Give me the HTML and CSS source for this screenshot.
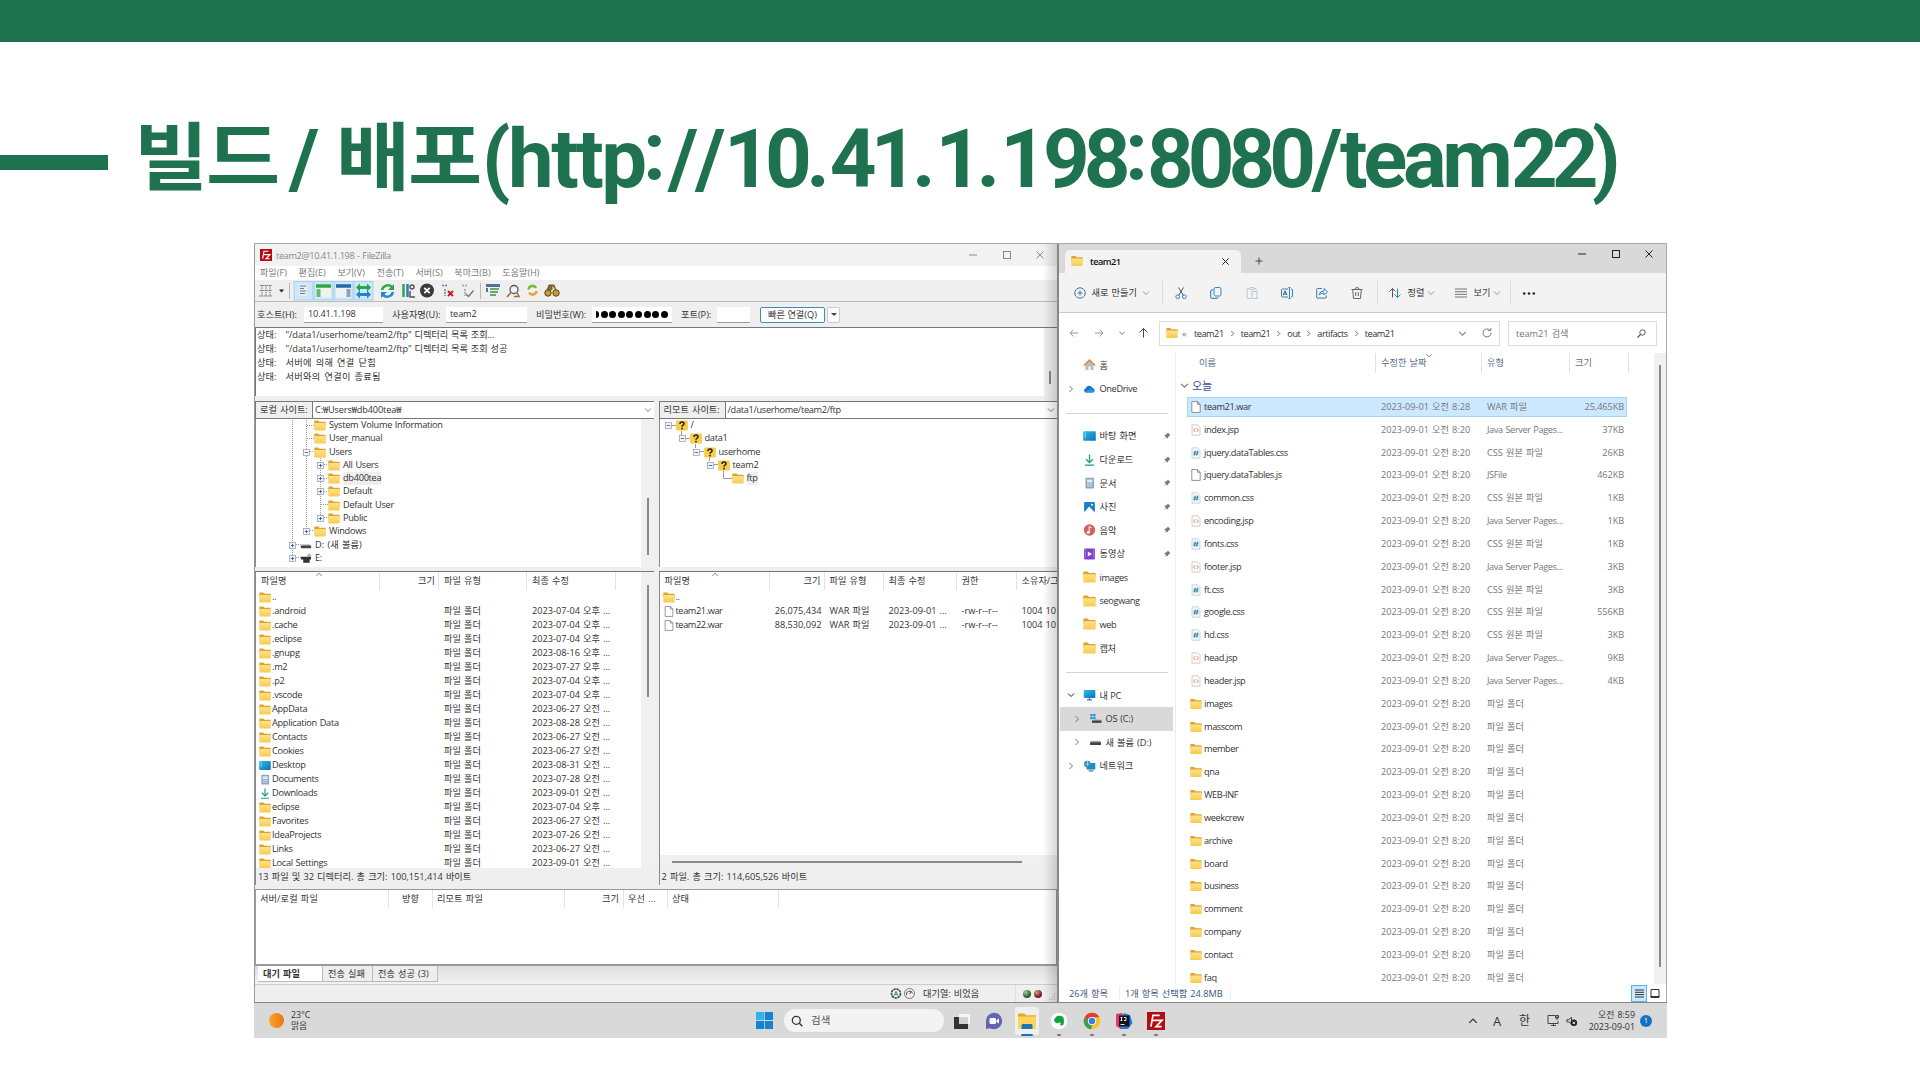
FILE: index.html
```html
<!DOCTYPE html>
<html lang="ko">
<head>
<meta charset="utf-8">
<title>빌드 / 배포</title>
<link rel="stylesheet" href="styles.css">
</head>
<body>
<svg class="defs" aria-hidden="true">
  <defs>
    <linearGradient id="gold" x1="0" y1="0" x2="0" y2="1"><stop offset="0" stop-color="#ffe28a"/><stop offset="1" stop-color="#f8cb4c"/></linearGradient>
    <linearGradient id="blue" x1="0" y1="0" x2="1" y2="1"><stop offset="0" stop-color="#2fc0ea"/><stop offset="1" stop-color="#0b6fb8"/></linearGradient>
    <symbol id="folder" viewBox="0 0 12 11"><path d="M.3 1.2Q.3.5 1 .5h3.300l1.200 1.300h5.500q.7 0 .7.7v3H.3z" fill="#dfa32c"/><rect x=".3" y="2.900" width="11.400" height="7.600" rx=".7" fill="url(#gold)"/></symbol>
    <symbol id="qfolder" viewBox="0 0 12 11"><rect x=".2" y=".6" width="11.600" height="10" rx=".7" fill="#f9cc45"/><path d="M4 4q0-2 2-2t2 1.700q0 1-1 1.500T6 6.700" fill="none" stroke="#222" stroke-width="1.500"/><rect x="5.200" y="7.800" width="1.600" height="1.600" fill="#222"/></symbol>
    <symbol id="file" viewBox="0 0 10 12"><path d="M.8.6h5.700L9.200 3.300v8.100H.8zM6.500.6v2.700h2.700" fill="#fff" stroke="#858585" stroke-width=".9"/></symbol>
    <symbol id="css" viewBox="0 0 10 12"><path d="M1 .8h5.700L9 3.200v8H1z" fill="#f2f8fb" stroke="#b7c9d3" stroke-width=".7"/><path d="M4.300 3.600 3.300 8.600M6.700 3.600 5.700 8.600M2.600 5.200h5M2.300 7.100h5" stroke="#2b7e9c" stroke-width=".9"/></symbol>
    <symbol id="jsp" viewBox="0 0 10 12"><path d="M1 .8h5.700L9 3.200v8H1z" fill="#fffdfb" stroke="#bbb" stroke-width=".7"/><path d="M4.200 4.200 2.600 6.100 4.200 8M5.800 4.200l1.600 1.900L5.800 8" fill="none" stroke="#d4825c" stroke-width=".9"/></symbol>
    <symbol id="desk" viewBox="0 0 12 10"><rect x=".2" y=".6" width="11.600" height="8.800" rx=".8" fill="url(#blue)"/><path d="M1.700 2.500h1M1.700 4.300h1M1.700 6.100h1" stroke="#d6f5ff" stroke-width=".8"/></symbol>
    <symbol id="doc" viewBox="0 0 12 12"><rect x="2" y=".7" width="8.500" height="10.800" rx=".8" fill="#8ba6c1"/><rect x="3.500" y="2.500" width="5.500" height="3" fill="#dfe9f3"/><path d="M3.500 7h5.500M3.500 9h5.500" stroke="#e8eff6" stroke-width=".8"/></symbol>
    <symbol id="down" viewBox="0 0 12 12"><path d="M6 .5v8M2.500 5.200 6 8.700l3.500-3.500M1.500 11.200h9" fill="none" stroke="#1e9e80" stroke-width="1.300"/></symbol>
    <symbol id="pic" viewBox="0 0 12 12"><rect x=".6" y="1" width="10.800" height="10" rx="1" fill="#1780c8"/><path d="M1 11l4.600-5.500L10.800 11z" fill="#fff"/><circle cx="8.500" cy="3.700" r="1" fill="#fff"/></symbol>
    <symbol id="music" viewBox="0 0 12 12"><circle cx="6" cy="6" r="5.700" fill="#d1625c"/><path d="M5.700 8.500V2.600l2.300 1" fill="none" stroke="#fff" stroke-width="1"/><circle cx="4.700" cy="8.500" r="1.400" fill="#fff"/></symbol>
    <symbol id="video" viewBox="0 0 12 12"><rect x=".6" y=".6" width="10.800" height="10.800" rx=".8" fill="#7c3fce"/><path d="M4.300 3.500 8.500 6l-4.200 2.500z" fill="#fff"/><path d="M2 1.500v9M10 1.500v9" stroke="#d9c1f5" stroke-width=".8" stroke-dasharray="1 1.200"/></symbol>
    <symbol id="pc" viewBox="0 0 12 12"><rect x=".2" y="1" width="11.600" height="8" rx=".7" fill="url(#blue)"/><path d="M3.500 10.800h5M6 9v1.800" stroke="#47769a" stroke-width="1.200"/></symbol>
    <symbol id="net" viewBox="0 0 12 12"><rect x="3" y="3" width="8.800" height="6.500" rx=".6" fill="#1b8ccb"/><circle cx="3.800" cy="4" r="3.200" fill="#3d88b5"/><path d="M2 4h4M4 1v5" stroke="#bfe2f5" stroke-width=".7"/><path d="M5 11h5M7.400 9.500V11" stroke="#47769a" stroke-width="1.100"/></symbol>
    <symbol id="drive" viewBox="0 0 12 12"><path d="M1.500 5h9l1 1.500H.5z" fill="#999"/><rect x=".5" y="6.200" width="11" height="2.700" rx=".5" fill="#444"/></symbol>
    <symbol id="osdrive" viewBox="0 0 12 12"><path d="M.8 1h2.300v2.300H.8zM3.700 1H6v2.300H3.700zM.8 3.900h2.300v2.300H.8zM3.700 3.900H6v2.300H3.700z" fill="#1d91d8"/><path d="M5 6.500h6l.8 1.200H4.500z" fill="#aaa"/><rect x="2.500" y="7.500" width="9.500" height="2.400" fill="#444"/></symbol>
    <symbol id="reader" viewBox="0 0 12 12"><circle cx="9.500" cy="2.500" r="2" fill="#bbb"/><path d="M.5 4h11v3H.5zM3 7h7v3.500H3z" fill="#333"/></symbol>
    <symbol id="home" viewBox="0 0 12 12"><path d="M2 5.500V11h3V7.500h2V11h3V5.500L6 2z" fill="#b9bec4"/><path d="M.5 6.500 6 1.200l5.500 5.300" fill="none" stroke="#d98546" stroke-width="1.700"/></symbol>
    <symbol id="cloud" viewBox="0 0 12 12"><path d="M2.500 9.500A2.200 2.200 0 0 1 2.300 5.200 3.500 3.500 0 0 1 8.800 4.700 2.500 2.500 0 0 1 9.500 9.500z" fill="#1276d0"/><path d="M1.500 9 7 5.600l4.200 3q-.6.900-1.700.9h-7z" fill="#2597e6"/></symbol>
    <symbol id="pin" viewBox="0 0 8 8"><path d="M4.800.5 7.500 3.200 5.900 4 4.600 6.600 3.100 5.200.7 7.400l2.100-2.700-1.500-1.400L4 2.100z" fill="#777"/></symbol>
    <symbol id="plus" viewBox="0 0 7 7"><rect x=".5" y=".5" width="6" height="6" fill="#f4f6fa" stroke="#8c98a8" stroke-width=".7"/><path d="M1.800 3.500h3.400M3.500 1.800v3.400" stroke="#2f4f88" stroke-width=".8"/></symbol>
    <symbol id="minus" viewBox="0 0 7 7"><rect x=".5" y=".5" width="6" height="6" fill="#f4f6fa" stroke="#8c98a8" stroke-width=".7"/><path d="M1.800 3.500h3.400" stroke="#2f4f88" stroke-width=".8"/></symbol>
    <symbol id="cv" viewBox="0 0 8 8"><path d="M1 2.500 4 5.500l3-3" fill="none" stroke="currentColor" stroke-width="1"/></symbol>
    <symbol id="cr" viewBox="0 0 8 8"><path d="M2.500 1 5.500 4l-3 3" fill="none" stroke="currentColor" stroke-width="1"/></symbol>
    <symbol id="cu" viewBox="0 0 8 8"><path d="M1 5.500 4 2.500l3 3" fill="none" stroke="currentColor" stroke-width="1"/></symbol>
    <symbol id="wmin" viewBox="0 0 10 10"><path d="M1 5h8" stroke="currentColor"/></symbol>
    <symbol id="wmax" viewBox="0 0 10 10"><rect x="1.500" y="1.500" width="7" height="7" fill="none" stroke="currentColor"/></symbol>
    <symbol id="wx" viewBox="0 0 10 10"><path d="M1.500 1.500l7 7M8.500 1.500l-7 7" stroke="currentColor"/></symbol>
    <symbol id="fz" viewBox="0 0 16 16"><rect width="16" height="16" fill="#b30d12"/><path d="M3.500 13 5.300 3h6M4.400 7.500h4M8.300 7.500h5L8 13h5" fill="none" stroke="#fff" stroke-width="1.500"/></symbol>
  </defs>
</svg>

<div class="topbar"></div>
<header class="title"><span class="dash"></span><h1><span class="t1">빌드</span><span class="t2">/</span><span class="t3">배포</span><span class="u1">(http</span><span class="u2 colon">:</span><span class="u3">//</span><span class="u4">10<i>.</i>41<i>.</i>1<i>.</i>1</span><span class="u5">98</span><span class="u6 colon">:</span><span class="u7">8080</span><span class="u8">/</span><span class="u9">team</span><span class="u10">22</span><span>)</span></h1></header>

<main class="screen">
<div class="windows">
<section class="fzwin">
  <div class="fz-title"><svg class="i12"><use href="#fz"/></svg><span>team2@10.41.1.198 - FileZilla</span><div class="winbtns"><svg><use href="#wmin"/></svg><svg><use href="#wmax"/></svg><svg><use href="#wx"/></svg></div></div>
  <nav class="fz-menu"><span>파일(F)</span><span>편집(E)</span><span>보기(V)</span><span>전송(T)</span><span>서버(S)</span><span>북마크(B)</span><span>도움말(H)</span></nav>
  <div class="fz-tools">
    <svg class="strip" width="310" height="22" viewBox="0 0 310 22">
      <g stroke="#666" stroke-width=".9" stroke-dasharray="1.500 .8" fill="none"><path d="M5 5.500h12M5 10.500h12M4 16h14M7 5v11M11 5v11M15 5v11"/></g>
      <path d="M24 9.500h5l-2.500 3z" fill="#222"/>
      <path d="M34.500 3v16M225.500 3v16" stroke="#b9b9b9"/>
      <g fill="#cde6f8" stroke="#9bccee" stroke-width=".8"><rect x="39" y="1.500" width="19" height="18.500"/><rect x="59" y="1.500" width="19" height="18.500"/><rect x="79" y="1.500" width="19" height="18.500"/><rect x="99" y="1.500" width="19" height="18.500"/></g>
      <rect x="44" y="4" width="8" height="12" fill="#e5edf2"/><path d="M45 6h6M45 8.500h4M45 11h6M45 13.500h5" stroke="#66809a"/>
      <rect x="61" y="4.500" width="15" height="13" fill="#eef4ee"/><path d="M61 6h15" stroke="#2ca745" stroke-width="3.500"/><path d="M63.500 9v8" stroke="#69b978" stroke-width="4"/>
      <rect x="81" y="4.500" width="15" height="13" fill="#edf2f7"/><path d="M81 6h15" stroke="#2667ab" stroke-width="3.500"/><path d="M93.500 9v8" stroke="#8fa4b8" stroke-width="4"/>
      <path d="M103 7.500h12" stroke="#2ba84a" stroke-width="3"/><path d="M112 3.500l4 4-4 4zM105 3.500l-4 4 4 4z" fill="#23a53f"/><path d="M103 14.500h12" stroke="#2384cc" stroke-width="3"/><path d="M112 10.500l4 4-4 4zM105 10.500l-4 4 4 4z" fill="#2384cc"/>
      <path d="M127 10a6 6 0 0 1 10-3" fill="none" stroke="#2aa84c" stroke-width="2.500"/><path d="M139 4v6h-6z" fill="#2aa84c"/><path d="M138 12a6 6 0 0 1-10 3" fill="none" stroke="#248ac9" stroke-width="2.500"/><path d="M126 18v-6h6z" fill="#248ac9"/>
      <path d="M148.500 4v13" stroke="#2aa84c" stroke-width="2.500"/><path d="M152.500 4v13" stroke="#277fc5" stroke-width="2.500"/><circle cx="157" cy="7" r="2" fill="none" stroke="#555" stroke-width="1.500"/><path d="M155 11v6h5" stroke="#555" fill="none" stroke-width="1.500"/>
      <circle cx="172" cy="10.500" r="7" fill="#3a3a3a"/><path d="M169.300 7.800l5.400 5.400M174.700 7.800l-5.400 5.400" stroke="#fff" stroke-width="1.800"/>
      <path d="M187 5.500h6M190 9v7" stroke="#5580b5" stroke-width="1.500" stroke-dasharray="2 1"/><path d="M193 11l5 5M198 11l-5 5" stroke="#c4202a" stroke-width="2"/>
      <path d="M207 5.500h6M210 9v7" stroke="#8ba2bf" stroke-width="1.500" stroke-dasharray="2 1"/><path d="M211 14l2.500 2.500 5-6" fill="none" stroke="#777" stroke-width="1.500"/>
      <path d="M231 5.500h14" stroke="#4f7395" stroke-width="3"/><path d="M235 9h9M235 12h8M235 15h6" stroke="#6aa76d" stroke-width="2"/><path d="M232 8v4" stroke="#4f7395" stroke-width="2"/>
      <circle cx="259" cy="9.500" r="4" fill="#edf3fa" stroke="#555" stroke-width="1.300"/><path d="M256 12.500l-4 4.500M262 12.500l2 4h-5" fill="none" stroke="#966f49" stroke-width="1.500"/>
      <path d="M273.500 9.500a4 4 0 0 1 7.500-1.500" fill="none" stroke="#7fb73a" stroke-width="2.500"/><path d="M281.500 11a4 4 0 0 1-7.500 1.500" fill="none" stroke="#e5a734" stroke-width="2.500"/>
      <path d="M291 13l3-8h3v5M302 13l-3-8h-2" fill="#8a6e2d" stroke="#6b5425" stroke-width="1"/><circle cx="293" cy="13" r="3.200" fill="#c99d35" stroke="#584315"/><circle cx="301" cy="13" r="3.200" fill="#c99d35" stroke="#584315"/>
    </svg>
  </div>
  <div class="quick">
    <span class="ql a">호스트(H):</span><span class="qf a">10.41.1.198</span>
    <span class="ql b">사용자명(U):</span><span class="qf b">team2</span>
    <span class="ql c">비밀번호(W):</span><span class="qf c"><i class="cut"></i><i></i><i></i><i></i><i></i><i></i><i></i><i></i><i></i></span>
    <span class="ql d">포트(P):</span><span class="qf d"></span>
    <button class="connect">빠른 연결(Q)</button><button class="more"><i></i></button>
  </div>
  <div class="log"><div class="lines">
    <p><b>상태:</b>"/data1/userhome/team2/ftp" 디렉터리 목록 조회...</p>
    <p><b>상태:</b>"/data1/userhome/team2/ftp" 디렉터리 목록 조회 성공</p>
    <p class="ko"><b>상태:</b>서버에 의해 연결 닫힘</p>
    <p class="ko"><b>상태:</b>서버와의 연결이 종료됨</p></div><div class="sb"><i class="th-log"></i></div>
  </div>
  <div class="panes">
    <div class="pane local">
      <div class="site"><label>로컬 사이트:</label><span>C:₩Users₩db400tea₩</span><svg class="i8"><use href="#cv"/></svg></div>
      <div class="tree">
        <div class="nodes">
          <svg class="guides" width="80" height="148"><path d="M37.500 0v138M51.500 0v113M65.500 38v61M52 7.500h8M52 20.500h8M55 33.500h6M69 46.500h6M69 60.500h6M69 73.500h6M66 86.500h8M69 99.500h6M55 112.500h6M41 126.500h6M41 139.500h6" stroke="#999" stroke-dasharray="1 1" fill="none"/></svg>
          <div class="n l1 leaf"><svg class="f"><use href="#folder"/></svg>System Volume Information</div>
          <div class="n l1 leaf"><svg class="f"><use href="#folder"/></svg>User_manual</div>
          <div class="n l1"><svg class="e"><use href="#minus"/></svg><svg class="f"><use href="#folder"/></svg>Users</div>
          <div class="n l2"><svg class="e"><use href="#plus"/></svg><svg class="f"><use href="#folder"/></svg>All Users</div>
          <div class="n l2"><svg class="e"><use href="#plus"/></svg><svg class="f"><use href="#folder"/></svg><span class="cur">db400tea</span></div>
          <div class="n l2"><svg class="e"><use href="#plus"/></svg><svg class="f"><use href="#folder"/></svg>Default</div>
          <div class="n l2 leaf"><svg class="f"><use href="#folder"/></svg>Default User</div>
          <div class="n l2"><svg class="e"><use href="#plus"/></svg><svg class="f"><use href="#folder"/></svg>Public</div>
          <div class="n l1"><svg class="e"><use href="#plus"/></svg><svg class="f"><use href="#folder"/></svg>Windows</div>
          <div class="n l0"><svg class="e"><use href="#plus"/></svg><svg class="f"><use href="#drive"/></svg><span class="ko">D: (새 볼륨)</span></div>
          <div class="n l0"><svg class="e"><use href="#plus"/></svg><svg class="f"><use href="#reader"/></svg>E:</div>
        </div><div class="sb"><i class="th-tree"></i></div>
      </div>
      <div class="list">
        <div class="rows">
          <div class="h r"><span>파일명</span><span class="num">크기</span><span>파일 유형</span><span>최종 수정</span><svg class="sort"><use href="#cu"/></svg></div>
          <div class="r"><span><svg><use href="#folder"/></svg>..</span></div>
          <div class="r"><span><svg><use href="#folder"/></svg>.android</span><span></span><span>파일 폴더</span><span>2023-07-04 오후 ...</span></div>
          <div class="r"><span><svg><use href="#folder"/></svg>.cache</span><span></span><span>파일 폴더</span><span>2023-07-04 오후 ...</span></div>
          <div class="r"><span><svg><use href="#folder"/></svg>.eclipse</span><span></span><span>파일 폴더</span><span>2023-07-04 오후 ...</span></div>
          <div class="r"><span><svg><use href="#folder"/></svg>.gnupg</span><span></span><span>파일 폴더</span><span>2023-08-16 오후 ...</span></div>
          <div class="r"><span><svg><use href="#folder"/></svg>.m2</span><span></span><span>파일 폴더</span><span>2023-07-27 오후 ...</span></div>
          <div class="r"><span><svg><use href="#folder"/></svg>.p2</span><span></span><span>파일 폴더</span><span>2023-07-04 오후 ...</span></div>
          <div class="r"><span><svg><use href="#folder"/></svg>.vscode</span><span></span><span>파일 폴더</span><span>2023-07-04 오후 ...</span></div>
          <div class="r"><span><svg><use href="#folder"/></svg>AppData</span><span></span><span>파일 폴더</span><span>2023-06-27 오전 ...</span></div>
          <div class="r"><span><svg><use href="#folder"/></svg>Application Data</span><span></span><span>파일 폴더</span><span>2023-08-28 오전 ...</span></div>
          <div class="r"><span><svg><use href="#folder"/></svg>Contacts</span><span></span><span>파일 폴더</span><span>2023-06-27 오전 ...</span></div>
          <div class="r"><span><svg><use href="#folder"/></svg>Cookies</span><span></span><span>파일 폴더</span><span>2023-06-27 오전 ...</span></div>
          <div class="r"><span><svg><use href="#desk"/></svg>Desktop</span><span></span><span>파일 폴더</span><span>2023-08-31 오전 ...</span></div>
          <div class="r"><span><svg><use href="#doc"/></svg>Documents</span><span></span><span>파일 폴더</span><span>2023-07-28 오전 ...</span></div>
          <div class="r"><span><svg><use href="#down"/></svg>Downloads</span><span></span><span>파일 폴더</span><span>2023-09-01 오전 ...</span></div>
          <div class="r"><span><svg><use href="#folder"/></svg>eclipse</span><span></span><span>파일 폴더</span><span>2023-07-04 오후 ...</span></div>
          <div class="r"><span><svg><use href="#folder"/></svg>Favorites</span><span></span><span>파일 폴더</span><span>2023-06-27 오전 ...</span></div>
          <div class="r"><span><svg><use href="#folder"/></svg>IdeaProjects</span><span></span><span>파일 폴더</span><span>2023-07-26 오전 ...</span></div>
          <div class="r"><span><svg><use href="#folder"/></svg>Links</span><span></span><span>파일 폴더</span><span>2023-06-27 오전 ...</span></div>
          <div class="r"><span><svg><use href="#folder"/></svg>Local Settings</span><span></span><span>파일 폴더</span><span>2023-09-01 오전 ...</span></div>
        </div><div class="sb"><i class="th-list"></i></div>
      </div>
      <div class="sum">13 파일 및 32 디렉터리. 총 크기: 100,151,414 바이트</div>
    </div>
    <div class="pane remote">
      <div class="site"><label>리모트 사이트:</label><span>/data1/userhome/team2/ftp</span><svg class="i8"><use href="#cv"/></svg></div>
      <div class="tree">
        <div class="nodes">
          <svg class="guides" width="90" height="148"><path d="M12 7.500h5M26 20.500h5M40 33.500h5M54 46.500h5M22.500 13v4M36.500 26v4M50.500 39v4M64.500 52v8.500h9" stroke="#999" fill="none"/></svg>
          <div class="n m0"><svg class="e"><use href="#minus"/></svg><svg class="f"><use href="#qfolder"/></svg>/</div>
          <div class="n m1"><svg class="e"><use href="#minus"/></svg><svg class="f"><use href="#qfolder"/></svg>data1</div>
          <div class="n m2"><svg class="e"><use href="#minus"/></svg><svg class="f"><use href="#qfolder"/></svg>userhome</div>
          <div class="n m3"><svg class="e"><use href="#minus"/></svg><svg class="f"><use href="#qfolder"/></svg>team2</div>
          <div class="n m4 leaf"><svg class="f"><use href="#folder"/></svg><span class="cur">ftp</span></div>
        </div>
      </div>
      <div class="list">
        <div class="rows">
          <div class="h r"><span>파일명</span><span class="num">크기</span><span>파일 유형</span><span>최종 수정</span><span>권한</span><span>소유자/그</span><svg class="sort"><use href="#cu"/></svg></div>
          <div class="r"><span><svg><use href="#folder"/></svg>..</span></div>
          <div class="r"><span><svg><use href="#file"/></svg>team21.war</span><span class="num">26,075,434</span><span>WAR 파일</span><span>2023-09-01 ...</span><span>-rw-r--r--</span><span>1004 10</span></div>
          <div class="r"><span><svg><use href="#file"/></svg>team22.war</span><span class="num">88,530,092</span><span>WAR 파일</span><span>2023-09-01 ...</span><span>-rw-r--r--</span><span>1004 10</span></div>
        </div>
        <div class="hsb"><i></i></div>
      </div>
      <div class="sum">2 파일. 총 크기: 114,605,526 바이트</div>
    </div>
  </div>
  <div class="queue"><div class="qh"><span>서버/로컬 파일</span><span>방향</span><span>리모트 파일</span><span class="num">크기</span><span>우선 ...</span><span>상태</span></div></div>
  <div class="tabs"><span class="on">대기 파일</span><span>전송 실패</span><span>전송 성공 (3)</span></div>
  <div class="fz-status">
    <svg width="26" height="13" viewBox="0 0 26 13"><circle cx="6" cy="6.500" r="4.500" fill="#eee" stroke="#444" stroke-width="1.600" stroke-dasharray="2.400 .6"/><path d="M4.300 8.700 6 4.300l1.700 4.400M5 7.400h2" stroke="#28a745" fill="none"/><circle cx="19.500" cy="6.500" r="5" fill="#eee" stroke="#777"/><path d="M16.500 8a3 3 0 0 1 6-1.500M19.500 7l2-2.500" stroke="#555" fill="none"/></svg>
    <span>대기열: 비었음</span><i class="vsep"></i><i class="led g"></i><i class="led r2"></i>
    <svg class="grip" width="8" height="8"><path d="M6 1h1M4 3.500h3M1 6h6" stroke="#aaa" stroke-dasharray="1.200 1.200"/></svg>
  </div>
  <div class="shade"></div>
</section>

<section class="exp">
  <div class="strip2"><div class="tab"><svg class="i12"><use href="#folder"/></svg><span>team21</span><svg class="i9"><use href="#wx"/></svg></div><svg class="add" viewBox="0 0 10 10"><path d="M1.500 5h7M5 1.500v7" stroke="#444"/></svg><div class="winbtns"><svg><use href="#wmin"/></svg><svg><use href="#wmax"/></svg><svg><use href="#wx"/></svg></div></div>
  <div class="cmds">
    <svg class="c1" width="14" height="14" viewBox="0 0 14 14"><circle cx="7" cy="7" r="5.200" fill="none" stroke="#56708a"/><path d="M4.500 7h5M7 4.500v5" stroke="#2a7ec0"/></svg>
    <span class="w1">새로 만들기</span><svg class="i8"><use href="#cv"/></svg><i class="vsep"></i>
    <svg width="14" height="14" viewBox="0 0 14 14"><path d="M4.500 1.500l5 8M9.500 1.500l-5 8" stroke="#555" fill="none"/><circle cx="3.700" cy="10.700" r="1.900" fill="none" stroke="#2b86cc"/><circle cx="10.300" cy="10.700" r="1.900" fill="none" stroke="#2b86cc"/></svg>
    <svg width="14" height="14" viewBox="0 0 14 14"><rect x="5" y="1.500" width="7" height="8.500" rx="1.500" fill="none" stroke="#2b86cc"/><path d="M4 4H2.700q-1 0-1 1v6.300q0 1 1 1H8q1 0 1-1" fill="none" stroke="#2b6ea8"/></svg>
    <svg width="14" height="14" viewBox="0 0 14 14"><path d="M5 2.500H2.200v10H6M9 2.500h2v2M5 1.500h4v2H5z" fill="none" stroke="#c6c9cc"/><rect x="7" y="5.500" width="5" height="7" fill="none" stroke="#a9cbe4"/></svg>
    <svg width="14" height="14" viewBox="0 0 14 14"><path d="M8 3H2.500q-1 0-1 1v6q0 1 1 1H8M11 3q1.500 0 1.500 1v6q0 1-1.500 1M9.500 1.500v11M8.500 1.500h2M8.500 12.500h2" fill="none" stroke="#2b86cc"/><path d="M3.200 9.200 5 4.800l1.800 4.400M4 8h2.200" stroke="#555" fill="none"/></svg>
    <svg width="14" height="14" viewBox="0 0 14 14"><path d="M7 2.500H2.500q-.8 0-.8.800v8q0 .8.800.8h8q.8 0 .8-.8V9.500" fill="none" stroke="#4d7898"/><path d="M4 9q.5-4 5-4V2.500l3.500 3.300L9 9V7Q5.500 7 4 9z" fill="none" stroke="#2b86cc"/></svg>
    <svg class="trash" width="14" height="14" viewBox="0 0 14 14"><path d="M1.500 3.500h11M5 3.500q0-2 2-2t2 2M2.700 3.500l.8 9h7l.8-9M5.700 6v4M8.300 6v4" fill="none" stroke="#666"/></svg>
    <i class="vsep v2"></i>
    <svg class="c3" width="14" height="14" viewBox="0 0 14 14"><path d="M4.500 11.500v-9M1.500 5.500l3-3 3 3" fill="none" stroke="#555"/><path d="M9.500 2.500v9M6.500 8.500l3 3 3-3" fill="none" stroke="#2b86cc"/></svg>
    <span class="w2">정렬</span><svg class="i8"><use href="#cv"/></svg>
    <svg class="c4" width="14" height="14" viewBox="0 0 14 14"><path d="M1 3h12M1 5.700h12M1 8.300h12M1 11h12" stroke="#666" stroke-width=".9"/></svg>
    <span class="w2">보기</span><svg class="i8"><use href="#cv"/></svg><i class="vsep v3"></i>
    <svg width="14" height="14" viewBox="0 0 14 14"><g fill="#222"><circle cx="2.200" cy="7.500" r="1.300"/><circle cx="7" cy="7.500" r="1.300"/><circle cx="11.800" cy="7.500" r="1.300"/></g></svg>
  </div>
  <div class="nav">
    <svg class="arrows" width="92" height="14" viewBox="0 0 92 14"><g fill="none"><path d="M12 7H4M7.500 3.500 4 7l3.500 3.500M29 7h8M33.500 3.500 37 7l-3.500 3.500" stroke="#999"/><path d="M53.500 5.500l2.500 3 2.500-3" stroke="#888"/><path d="M77.500 11.500v-9M73.500 6.500l4-4 4 4" stroke="#444"/></g></svg>
    <div class="addr"><svg class="i12"><use href="#folder"/></svg><em>«</em><span>team21</span><svg><use href="#cr"/></svg><span>team21</span><svg><use href="#cr"/></svg><span>out</span><svg><use href="#cr"/></svg><span>artifacts</span><svg><use href="#cr"/></svg><span>team21</span><svg class="drop"><use href="#cv"/></svg><svg class="ref" viewBox="0 0 12 12"><path d="M10 6a4 4 0 1 1-1.300-3M9.800 1v2.600H7.200" fill="none" stroke="#777"/></svg></div>
    <div class="find"><span>team21 검색</span><svg width="11" height="11" viewBox="0 0 11 11"><circle cx="6.500" cy="4.500" r="2.700" fill="none" stroke="#555"/><path d="M4.500 6.500 1.500 9.500" stroke="#555" stroke-width="1.300"/></svg></div>
  </div>
  <div class="body">
    <aside>
      <div class="s"><b></b><svg><use href="#home"/></svg>홈</div>
      <div class="s"><b><svg><use href="#cr"/></svg></b><svg><use href="#cloud"/></svg>OneDrive</div>
      <div class="s hr"></div>
      <div class="s ko"><b></b><svg><use href="#desk"/></svg>바탕 화면<svg class="pin"><use href="#pin"/></svg></div>
      <div class="s ko"><b></b><svg><use href="#down"/></svg>다운로드<svg class="pin"><use href="#pin"/></svg></div>
      <div class="s ko"><b></b><svg><use href="#doc"/></svg>문서<svg class="pin"><use href="#pin"/></svg></div>
      <div class="s ko"><b></b><svg><use href="#pic"/></svg>사진<svg class="pin"><use href="#pin"/></svg></div>
      <div class="s ko"><b></b><svg><use href="#music"/></svg>음악<svg class="pin"><use href="#pin"/></svg></div>
      <div class="s ko"><b></b><svg><use href="#video"/></svg>동영상<svg class="pin"><use href="#pin"/></svg></div>
      <div class="s"><b></b><svg><use href="#folder"/></svg>images</div>
      <div class="s"><b></b><svg><use href="#folder"/></svg>seogwang</div>
      <div class="s"><b></b><svg><use href="#folder"/></svg>web</div>
      <div class="s"><b></b><svg><use href="#folder"/></svg>캡처</div>
      <div class="s hr"></div>
      <div class="s"><b class="open"><svg><use href="#cv"/></svg></b><svg><use href="#pc"/></svg>내 PC</div>
      <div class="s sub sel"><b><svg><use href="#cr"/></svg></b><svg><use href="#osdrive"/></svg>OS (C:)</div>
      <div class="s sub ko"><b><svg><use href="#cr"/></svg></b><svg><use href="#drive"/></svg>새 볼륨 (D:)</div>
      <div class="s ko"><b><svg><use href="#cr"/></svg></b><svg><use href="#net"/></svg>네트워크</div>
    </aside>
    <div class="files">
      <div class="fh"><span>이름</span><span>수정한 날짜</span><span>유형</span><span>크기</span><svg class="sort"><use href="#cv"/></svg></div>
      <div class="grp"><svg class="i9"><use href="#cv"/></svg>오늘</div>
      <div class="fr on"><span><svg><use href="#file"/></svg>team21.war</span><span>2023-09-01 오전 8:28</span><span>WAR 파일</span><span>25,465KB</span></div>
      <div class="fr"><span><svg><use href="#jsp"/></svg>index.jsp</span><span>2023-09-01 오전 8:20</span><span class="en">Java Server Pages...</span><span>37KB</span></div>
      <div class="fr"><span><svg><use href="#css"/></svg>jquery.dataTables.css</span><span>2023-09-01 오전 8:20</span><span>CSS 원본 파일</span><span>26KB</span></div>
      <div class="fr"><span><svg><use href="#file"/></svg>jquery.dataTables.js</span><span>2023-09-01 오전 8:20</span><span class="en">JSFile</span><span>462KB</span></div>
      <div class="fr"><span><svg><use href="#css"/></svg>common.css</span><span>2023-09-01 오전 8:20</span><span>CSS 원본 파일</span><span>1KB</span></div>
      <div class="fr"><span><svg><use href="#jsp"/></svg>encoding.jsp</span><span>2023-09-01 오전 8:20</span><span class="en">Java Server Pages...</span><span>1KB</span></div>
      <div class="fr"><span><svg><use href="#css"/></svg>fonts.css</span><span>2023-09-01 오전 8:20</span><span>CSS 원본 파일</span><span>1KB</span></div>
      <div class="fr"><span><svg><use href="#jsp"/></svg>footer.jsp</span><span>2023-09-01 오전 8:20</span><span class="en">Java Server Pages...</span><span>3KB</span></div>
      <div class="fr"><span><svg><use href="#css"/></svg>ft.css</span><span>2023-09-01 오전 8:20</span><span>CSS 원본 파일</span><span>3KB</span></div>
      <div class="fr"><span><svg><use href="#css"/></svg>google.css</span><span>2023-09-01 오전 8:20</span><span>CSS 원본 파일</span><span>556KB</span></div>
      <div class="fr"><span><svg><use href="#css"/></svg>hd.css</span><span>2023-09-01 오전 8:20</span><span>CSS 원본 파일</span><span>3KB</span></div>
      <div class="fr"><span><svg><use href="#jsp"/></svg>head.jsp</span><span>2023-09-01 오전 8:20</span><span class="en">Java Server Pages...</span><span>9KB</span></div>
      <div class="fr"><span><svg><use href="#jsp"/></svg>header.jsp</span><span>2023-09-01 오전 8:20</span><span class="en">Java Server Pages...</span><span>4KB</span></div>
      <div class="fr"><span><svg><use href="#folder"/></svg>images</span><span>2023-09-01 오전 8:20</span><span>파일 폴더</span></div>
      <div class="fr"><span><svg><use href="#folder"/></svg>masscom</span><span>2023-09-01 오전 8:20</span><span>파일 폴더</span></div>
      <div class="fr"><span><svg><use href="#folder"/></svg>member</span><span>2023-09-01 오전 8:20</span><span>파일 폴더</span></div>
      <div class="fr"><span><svg><use href="#folder"/></svg>qna</span><span>2023-09-01 오전 8:20</span><span>파일 폴더</span></div>
      <div class="fr"><span><svg><use href="#folder"/></svg>WEB-INF</span><span>2023-09-01 오전 8:20</span><span>파일 폴더</span></div>
      <div class="fr"><span><svg><use href="#folder"/></svg>weekcrew</span><span>2023-09-01 오전 8:20</span><span>파일 폴더</span></div>
      <div class="fr"><span><svg><use href="#folder"/></svg>archive</span><span>2023-09-01 오전 8:20</span><span>파일 폴더</span></div>
      <div class="fr"><span><svg><use href="#folder"/></svg>board</span><span>2023-09-01 오전 8:20</span><span>파일 폴더</span></div>
      <div class="fr"><span><svg><use href="#folder"/></svg>business</span><span>2023-09-01 오전 8:20</span><span>파일 폴더</span></div>
      <div class="fr"><span><svg><use href="#folder"/></svg>comment</span><span>2023-09-01 오전 8:20</span><span>파일 폴더</span></div>
      <div class="fr"><span><svg><use href="#folder"/></svg>company</span><span>2023-09-01 오전 8:20</span><span>파일 폴더</span></div>
      <div class="fr"><span><svg><use href="#folder"/></svg>contact</span><span>2023-09-01 오전 8:20</span><span>파일 폴더</span></div>
      <div class="fr"><span><svg><use href="#folder"/></svg>faq</span><span>2023-09-01 오전 8:20</span><span>파일 폴더</span></div>
    </div>
    <div class="sb"><i class="th-exp"></i></div>
  </div>
  <div class="ex-status"><span class="x1">26개 항목</span><span class="x2">1개 항목 선택함 24.8MB</span><svg width="34" height="17" viewBox="0 0 34 17"><rect x=".5" y=".5" width="15" height="16" fill="#cce8ff" stroke="#5eb0e0"/><path d="M4 5h9M4 7.300h9M4 9.600h9M4 12h9" stroke="#333"/><path d="M20 4.500h8v8h-8zM19.500 11.500h9" fill="none" stroke="#333"/></svg></div>
</section>
</div>

<footer class="taskbar">
  <i class="sun"></i><div class="weather"><span>23°C</span><span>맑음</span></div>
  <svg class="win" viewBox="0 0 18 18"><path d="M0 0h8.600v8.600H0zM9.400 0H18v8.600H9.400zM0 9.400h8.600V18H0zM9.400 9.400H18V18H9.400z" fill="#1384d4"/><path d="M0 0h8.600v8.600H0z" fill="#35b2ea"/></svg>
  <div class="search"><svg width="12" height="12" viewBox="0 0 12 12"><circle cx="5.300" cy="5.300" r="4" fill="none" stroke="#333" stroke-width="1.300"/><path d="M8.300 8.300l3 3" stroke="#333" stroke-width="1.400"/></svg><span>검색</span></div>
  <div class="apps">
    <div class="app"><svg viewBox="0 0 18 18"><rect x="6" y="2" width="11" height="10" fill="#f7f7f7"/><path d="M1 5h5v7h9v5H1z" fill="#333"/><path d="M6 5h9v7H6z" fill="#999" opacity=".4"/></svg></div>
    <div class="app"><svg viewBox="0 0 18 18"><path d="M9 .8a8.200 8.200 0 1 1-4 15.400L1 17V9A8.200 8.200 0 0 1 9 .8z" fill="#6264b4"/><rect x="4.500" y="6" width="6.500" height="6" rx="1.200" fill="#fff"/><path d="M11.500 8l2.500-1.500v5L11.500 10z" fill="#fff"/></svg></div>
    <div class="app act"><svg viewBox="0 0 18 18"><path d="M0 1.500h6.500L8 3.300h10V8H0z" fill="#e8a823"/><rect y="4.500" width="18" height="12.500" rx=".6" fill="#ffd45c"/><path d="M3.500 17v-3.500q0-1.500 1.500-1.500h8q1.500 0 1.500 1.500V17z" fill="#1c78b4"/></svg></div>
    <div class="app dot"><svg viewBox="0 0 18 18"><rect x="1" y="1" width="16" height="16" rx="7" fill="#fff"/><path d="M4 7.500 7 4q5-1 6.300 1.300 1.200 3 .2 7.200-1.500 1.800-3.200.5-.5-2 1-2-1.300-1-2-.2-2.800 1-4-.3Q4 9.500 4 7.500z" fill="#12a43b"/></svg></div>
    <div class="app dot"><svg viewBox="0 0 18 18"><circle cx="9" cy="9" r="8.300" fill="#f6c624"/><path d="M1.800 4.900A8.300 8.300 0 0 1 16.500 5.300H9L5.700 10.700z" fill="#e03e30"/><path d="M1.800 4.900 5.700 11 9 12.700 8.200 17.300A8.300 8.300 0 0 1 1.800 4.900z" fill="#32a350"/><circle cx="9" cy="9" r="4.100" fill="#fff"/><circle cx="9" cy="9" r="3.200" fill="#3a7de8"/></svg></div>
    <div class="app dot"><svg viewBox="0 0 18 18"><path d="M1 2l6-1 4 4-5 12-5-3z" fill="#e6356f"/><path d="M9 1l6 2 2.500 8L13 17H5z" fill="#1f7de6"/><rect x="4" y="3.500" width="10.500" height="11" fill="#151515"/><path d="M5.500 5.500h2M6.500 5.500v3M5.500 8.500h2M9 5.500h2v3H9M5.500 12.500h4" stroke="#fff" fill="none" stroke-width=".9"/></svg></div>
    <div class="app dot"><svg><use href="#fz"/></svg></div>
  </div>
  <div class="tray">
    <svg class="y1"><use href="#cu"/></svg>
    <span class="y2">A</span><span class="y3">한</span>
    <svg class="y4" viewBox="0 0 13 13"><path d="M8 1.500H1v8h10V7M4 11.500h5M6.500 9.500v2M10 1v5M8.500 1.500h3v2.500h-3z" fill="none" stroke="#444"/></svg>
    <svg class="y5" viewBox="0 0 13 13"><path d="M1 5h2l3-2.500v7L3 7.500H1z" fill="none" stroke="#333"/><circle cx="8.500" cy="8.500" r="3.500" fill="#222"/><path d="M7.200 7.200l2.600 2.600M9.800 7.200 7.200 9.800" stroke="#fff"/></svg>
    <div class="clock"><span>오전 8:59</span><span>2023-09-01</span></div><i class="note">1</i>
  </div>
</footer>
</main>
</body>
</html>
```
FILE: styles.css
```css
* { box-sizing: border-box; }
body { margin: 0; width: 1920px; height: 1080px; overflow: hidden; background: #fff; font: 9.2px/13px "Open Sans", "Noto Sans CJK KR", sans-serif; word-spacing: .7px; color: #333; display: flex; flex-direction: column; }
p, h1 { margin: 0; }
i, em { font-style: normal; }
b { font-weight: 400; }
svg { display: block; flex: none; }
button { font: inherit; color: inherit; margin: 0; padding: 0; }
span, label { white-space: nowrap; }
.defs { width: 0; height: 0; position: absolute; }
.i8 { width: 8px; height: 8px; }
.i9 { width: 9px; height: 9px; }
.i12 { width: 12px; height: 12px; }
.num { text-align: right; }

.topbar { height: 42px; background: #1f7250; flex: none; }
.title { height: 201px; flex: none; display: flex; align-items: flex-start; color: #1f7250; }
.dash { width: 108px; height: 15px; background: #1f7250; margin-top: 113px; }
.title h1 { font: 700 81.500px/100px Roboto, "Noto Sans CJK KR", sans-serif; font-kerning: none; display: flex; margin: 67px 0 0 26px; }
.t1, .t3 { font-size: 74px; letter-spacing: -2px; transform: scaleX(1.09); transform-origin: 0 50%; }
.t1 { width: 155px; }
.t2 { width: 47px; }
.t3 { width: 146px; }
.u1 { width: 161px; letter-spacing: -2.500px; }
.u2 { width: 25px; }
.u3 { width: 56px; letter-spacing: -3px; }
.u4 { width: 319px; letter-spacing: -5.700px; }
.u4 i { letter-spacing: 0; }
.u5 { width: 82px; letter-spacing: -6px; }
.u6 { width: 22px; }
.u7 { width: 165px; letter-spacing: -6px; }
.u8 { width: 28px; }
.u9 { width: 171px; letter-spacing: -4.300px; }
.u10 { width: 81px; letter-spacing: -6px; }
.colon { margin-top: -7px; }

.screen { width: 1413px; height: 795px; margin-left: 254px; display: flex; flex-direction: column; background: #efefef; }
.windows { display: flex; height: 760px; border-bottom: 1px solid #888; }

.fzwin { width: 805px; position: relative; display: flex; flex-direction: column; overflow: hidden; border-top: 1px solid #aaa; border-left: 1px solid #999; border-right: 2px solid #888; }
.fz-title { height: 22px; flex: none; background: #f2f2f2; display: flex; align-items: center; padding-left: 5px; gap: 4px; color: #888; }
.fz-title span { letter-spacing: -.38px; }
.winbtns { margin-left: auto; display: flex; gap: 23.500px; padding-right: 12px; }
.winbtns svg { width: 10px; height: 10px; }
.fz-menu { height: 14px; flex: none; background: #fff; display: flex; gap: 11.600px; padding-left: 5px; color: #777; font-size: 9px; letter-spacing: .08px; line-height: 14px; }
.fz-tools { height: 22px; flex: none; border-bottom: 1px solid #bbb; }
.quick { height: 25px; flex: none; display: flex; align-items: center; padding-left: 2px; }
.ql.a { width: 47px; } .ql.b { width: 54px; } .ql.c { width: 56px; } .ql.d { width: 36px; }
.qf { height: 16px; background: #fff; border-bottom: 1px solid #999; padding-left: 4px; line-height: 14px; display: flex; align-items: center; letter-spacing: -.15px; }
.qf.a { width: 79px; margin-right: 9px; } .qf.b { width: 81px; margin-right: 9px; }
.qf.c { width: 80px; margin-right: 9px; gap: 1.600px; } .qf.d { width: 33px; margin-right: 10px; }
.qf i { width: 7px; height: 7px; border-radius: 50%; background: #000; flex: none; }
.qf i.cut { width: 3px; border-radius: 0 4px 4px 0; }
.connect { width: 65px; height: 16px; border: 1px solid #3c8dbc; border-radius: 2px; background: #fdfdfd; line-height: 13px; }
.more { width: 13px; height: 16px; margin-left: 2px; border: 1px solid #ccc; border-radius: 2px; background: #fdfdfd; display: flex; align-items: center; justify-content: center; }
.more i { border: 3px solid transparent; border-top-color: #444; border-bottom: 0; }

.sb { width: 13px; flex: none; background: #f0f0f0; }
.sb i { display: block; width: 2px; margin-left: 6px; background: #888; }
.log { height: 69px; flex: none; border-top: 1px solid #777; border-left: 1px solid #777; background: #fff; display: flex; }
.log .sb i { margin-left: 5px; }
.lines { flex: 1; padding-left: 1px; }
.lines p { height: 14px; line-height: 14px; display: flex; white-space: nowrap; letter-spacing: -.08px; }
.lines b { width: 28.500px; letter-spacing: 0; }
.lines .ko { letter-spacing: .3px; word-spacing: 1.200px; }
.th-log { height: 13px; position: relative; top: 43px; }
.panes { margin-top: 5px; display: flex; gap: 5px; height: 484px; flex: none; }
.pane { display: flex; flex-direction: column; overflow: hidden; }
.local { width: 399px; } .remote { width: 399px; }
.site { height: 18px; flex: none; display: flex; align-items: center; background: #fff; border: 1px solid #777; border-right: 0; }
.site label { height: 16px; line-height: 15px; padding-left: 4px; background: #efefef; border-right: 1px solid #777; }
.local label { width: 57px; } .remote label { width: 66px; }
.site span { padding-left: 2px; line-height: 14px; flex: 1; letter-spacing: -.12px; }
.remote .site span { letter-spacing: -.3px; }
.site svg { margin-right: 2px; color: #777; }
.tree { height: 148px; flex: none; display: flex; background: #fff; border-left: 1px solid #888; }
.nodes { flex: 1; position: relative; overflow: hidden; }
.guides { position: absolute; left: -1px; top: -1px; }
.n { height: 13.300px; line-height: 12.600px; display: flex; align-items: flex-start; white-space: nowrap; position: relative; letter-spacing: -.28px; }
.n .ko { letter-spacing: .1px; }
.n .e { width: 7px; height: 7px; margin: 3px 4px 0 0; }
.n .f { width: 12px; height: 11px; margin: 1px 3px 0 0; }
.l0 { padding-left: 33px; } .l1 { padding-left: 47px; } .l2 { padding-left: 61px; }
.l1.leaf { padding-left: 58px; } .l2.leaf { padding-left: 72px; }
.m0 { padding-left: 5px; } .m1 { padding-left: 19px; } .m2 { padding-left: 33px; } .m3 { padding-left: 47px; } .m4 { padding-left: 72px; }
.cur { background: #eee; }
.th-tree { height: 57px; position: relative; top: 79px; }
.list { margin-top: 4px; height: 297px; flex: none; display: flex; background: #fff; border-top: 1px solid #777; border-left: 1px solid #888; position: relative; }
.remote .list { flex-direction: column; }
.rows { flex: 1; overflow: hidden; }
.r { display: grid; grid-template-columns: 124px 59px 88px 89px; height: 14px; line-height: 14px; }
.remote .r { grid-template-columns: 110px 55px 59px 73px 60px 60px; }
.r span { display: flex; align-items: center; padding-left: 5px; }
.r .num { justify-content: flex-end; padding-right: 3px; }
.r:not(.h) span:first-child { padding-left: 3px; letter-spacing: -.28px; }
.remote .r:not(.h) span:first-child { letter-spacing: -.4px; }
.r svg { width: 12px; height: 11px; margin-right: 1px; }
.r.h { height: 18px; line-height: 17px; }
.r.h span { border-right: 1px solid #e4e4e4; padding-bottom: 1px; }
.r .sort { position: absolute; top: -1px; left: 58px; width: 10px; height: 7px; color: #666; }
.remote .r .sort { left: 50px; }
.th-list { height: 112px; position: relative; top: 13px; }
.hsb { height: 13px; background: #f0f0f0; padding: 6px 0 0 12px; }
.hsb i { display: block; width: 350px; height: 2px; background: #888; }
.sum { height: 17px; line-height: 17px; padding-left: 2px; border-left: 1px solid #888; white-space: nowrap; word-spacing: .8px; }
.queue { margin-top: 4px; height: 77px; flex: none; background: #fff; border: 1px solid #999; border-bottom: 2px solid #999; }
.qh { display: grid; grid-template-columns: 133px 44px 132px 59px 44px 111px; height: 18px; line-height: 18px; }
.qh span { padding: 0 4px; border-right: 1px solid #e4e4e4; letter-spacing: .1px; }
.qh span:nth-child(2) { padding-left: 13px; }
.tabs { height: 19px; flex: none; display: flex; background: linear-gradient(#dedede, #f2f2f2); border-bottom: 1px solid #ccc; padding-left: 3px; align-items: flex-start; }
.tabs span { height: 16px; line-height: 15px; padding: 0 5px; width: 50px; border: 1px solid #bbb; border-top: 0; border-left: 0; background: #eee; }
.tabs .on { width: 65px; font-weight: 600; background: #fff; }
.tabs span:last-child { width: 65px; }
.fz-status { height: 17px; flex: none; display: flex; align-items: center; padding-left: 635px; }
.fz-status span { padding-left: 7px; width: 99px; }
.vsep { width: 1px; height: 17px; background: #ddd; flex: none; }
.led { width: 8px; height: 8px; border-radius: 50%; margin-left: 7px; }
.led.g { background: radial-gradient(circle at 35% 30%, #9bd39f, #24672b 60%, #1c401f); }
.led.r2 { margin-left: 3px; background: radial-gradient(circle at 35% 30%, #d9999a, #7a2022 60%, #451315); }
.grip { margin: 6px 0 0 6px; }
.shade { position: absolute; right: 0; top: 0; bottom: 0; width: 14px; background: linear-gradient(90deg, rgba(0,0,0,0), rgba(0,0,0,.16)); }

.exp { width: 608px; background: #fff; display: flex; flex-direction: column; border-top: 1px solid #aaa; border-right: 1px solid #aaa; }
.strip2 { height: 29px; flex: none; background: #d9d9d9; display: flex; align-items: flex-end; padding-left: 6px; }
.tab { width: 176px; height: 23px; background: #f3f3f3; border-radius: 5px 5px 0 0; display: flex; align-items: center; padding: 0 11px 1px 6px; color: #111; }
.tab span { flex: 1; padding-left: 7px; font-weight: 600; letter-spacing: -.5px; }
.add { width: 10px; height: 10px; margin: 0 0 7px 13px; }
.strip2 .winbtns { align-self: flex-start; margin-top: 5px; color: #222; padding-right: 12px; }
.cmds { height: 40px; flex: none; background: #f3f3f3; border-bottom: 1px solid #ccc; display: flex; align-items: center; padding-left: 13.500px; }
.cmds svg + svg { margin-left: 21.300px; }
.cmds .i8 { color: #999; }
.w1 { width: 49px; margin-left: 5px; }
.cmds .w1 + .i8 { margin-left: 1px; }
.cmds .vsep { height: 24px; margin: 0 11.500px 0 12px; }
.cmds .v2 { margin: 0 10px 0 13px; }
.w2 { width: 17px; margin-left: 5px; }
.cmds .w2 + .i8 { margin-left: 3px; }
.cmds .c4.c4 { margin-left: 19px; }
.cmds .v3 { margin: 0 11px 0 9px; }
.nav { height: 40px; flex: none; display: flex; align-items: center; padding-left: 7px; }
.addr, .find { height: 25px; border: 1px solid #ddd; background: #fff; display: flex; align-items: center; }
.addr { width: 341px; margin-left: 1px; padding-left: 6px; }
.addr span { letter-spacing: -.48px; }
.addr em { width: 16px; padding-left: 4px; color: #777; }
.addr svg:not(.i12) { width: 7px; height: 7px; margin: 0 5px; color: #555; }
.addr .drop.drop { width: 9px; height: 9px; margin-left: auto; color: #888; }
.addr .ref.ref { width: 12px; height: 12px; margin: 0 6px 0 9px; }
.find { width: 149px; margin-left: 8px; padding: 0 9px 0 7px; justify-content: space-between; color: #777; }
.body { flex: 1; min-height: 0; display: flex; }
aside { width: 117px; flex: none; border-right: 1px solid #eee; padding-top: .5px; }
.s { height: 23.570px; display: flex; align-items: center; white-space: nowrap; position: relative; padding-left: 8px; letter-spacing: -.35px; }
.s.ko { letter-spacing: 0; }
.s b { width: 16px; }
.s b svg { width: 8px; height: 8px; color: #777; }
.s b.open svg { color: #222; }
.s > svg { width: 13px; height: 12px; margin-right: 3.500px; }
.s .pin { width: 8px; height: 8px; margin: 0 4px 0 auto; }
.s.hr::after { content: ""; position: absolute; left: 7px; width: 102px; top: 12px; border-top: 1px solid #d4d4d4; }
.s.sub { padding-left: 14px; }
.s.sel { letter-spacing: -.2px; background: linear-gradient(#d9d9d9, #d9d9d9) 1px 0 / 113px 100% no-repeat; }
.files { flex: 1; overflow: hidden; padding-left: 11px; position: relative; }
.fh { height: 20px; display: grid; grid-template-columns: 189px 106px 88px 59px; color: #5a6f8c; line-height: 20px; }
.fh span { border-right: 1px solid #e2e2e2; padding-left: 5px; }
.fh span:first-child { padding-left: 12px; }
.fh .sort { position: absolute; left: 249px; top: -1px; width: 8px; height: 7px; color: #777; }
.grp { height: 24px; display: flex; align-items: center; color: #3c4aa0; font-size: 11px; gap: 3px; margin-left: -7px; padding-top: 1px; }
.grp svg { color: #777; }
.fr { height: 20px; margin-bottom: 2.830px; width: 440px; display: grid; grid-template-columns: 193px 106px 80px 57px; align-items: center; color: #777; border: 1px solid transparent; line-height: 18px; }
.fr span:first-child { color: #333; display: flex; align-items: center; padding-left: 2px; letter-spacing: -.38px; }
.fr .en { letter-spacing: -.38px; }
.fr span:nth-child(4) { text-align: right; letter-spacing: -.1px; }
.fr svg { width: 12px; height: 12px; margin-right: 2px; }
.fr.on { background: #cce8ff; border-color: #a6d3f3; }
.body .sb { width: 12px; }
.body .sb i { margin-left: 5px; }
.th-exp { height: 602px; position: relative; top: 12px; }
.ex-status { height: 18px; flex: none; display: flex; align-items: center; padding-left: 10px; color: #3a5680; }
.x1 { width: 51px; border-right: 1px solid #eee; line-height: 14px; padding-top: 1px; }
.x2 { width: 111px; padding: 1px 0 0 5px; border-right: 1px solid #eee; line-height: 14px; }
.ex-status svg { margin: 0 1px 0 auto; }

.taskbar { height: 35px; background: #d9d9d9; display: flex; align-items: center; }
.sun { width: 15px; height: 15px; border-radius: 50%; background: linear-gradient(90deg, #f9a726, #ec7313); margin-left: 15px; }
.weather { margin-left: 7px; display: flex; flex-direction: column; width: 50px; line-height: 11px; font-size: 8.800px; }
.win { width: 17px; height: 17px; margin-left: 415px; }
.search { width: 160px; height: 23px; border-radius: 12px; background: #f3f3f3; margin-left: 11px; display: flex; align-items: center; padding-left: 7px; gap: 8px; font-size: 10.500px; color: #555; }
.apps { display: flex; margin-left: 6px; gap: 8.400px; }
.app { width: 24px; height: 28px; position: relative; display: flex; align-items: center; justify-content: center; border-radius: 3px; }
.app svg { width: 18px; height: 18px; }
.act { background: #f0f0f0; }
.act::after, .dot::after { content: ""; position: absolute; bottom: -1px; left: 6px; width: 12px; height: 2px; background: #1773b8; border-radius: 1px; }
.dot::after { left: 10px; width: 4px; background: #777; }
.tray { margin-left: auto; display: flex; align-items: center; padding-right: 15px; }
.y1 { width: 10px; height: 10px; color: #333; }
.y2 { width: 12px; margin-left: 13px; font-size: 13px; line-height: 16px; text-align: center; }
.y3 { width: 13px; margin-left: 16px; font-size: 12px; line-height: 16px; }
.y4 { width: 13px; height: 13px; margin-left: 15px; }
.y5 { width: 12px; height: 12px; margin-left: 6px; }
.clock { width: 57px; display: flex; flex-direction: column; align-items: flex-end; line-height: 12px; font-size: 8.900px; }
.note { width: 12px; height: 12px; border-radius: 50%; background: #1273c2; color: #fff; font-size: 7px; line-height: 12px; text-align: center; margin-left: 5px; }
```
